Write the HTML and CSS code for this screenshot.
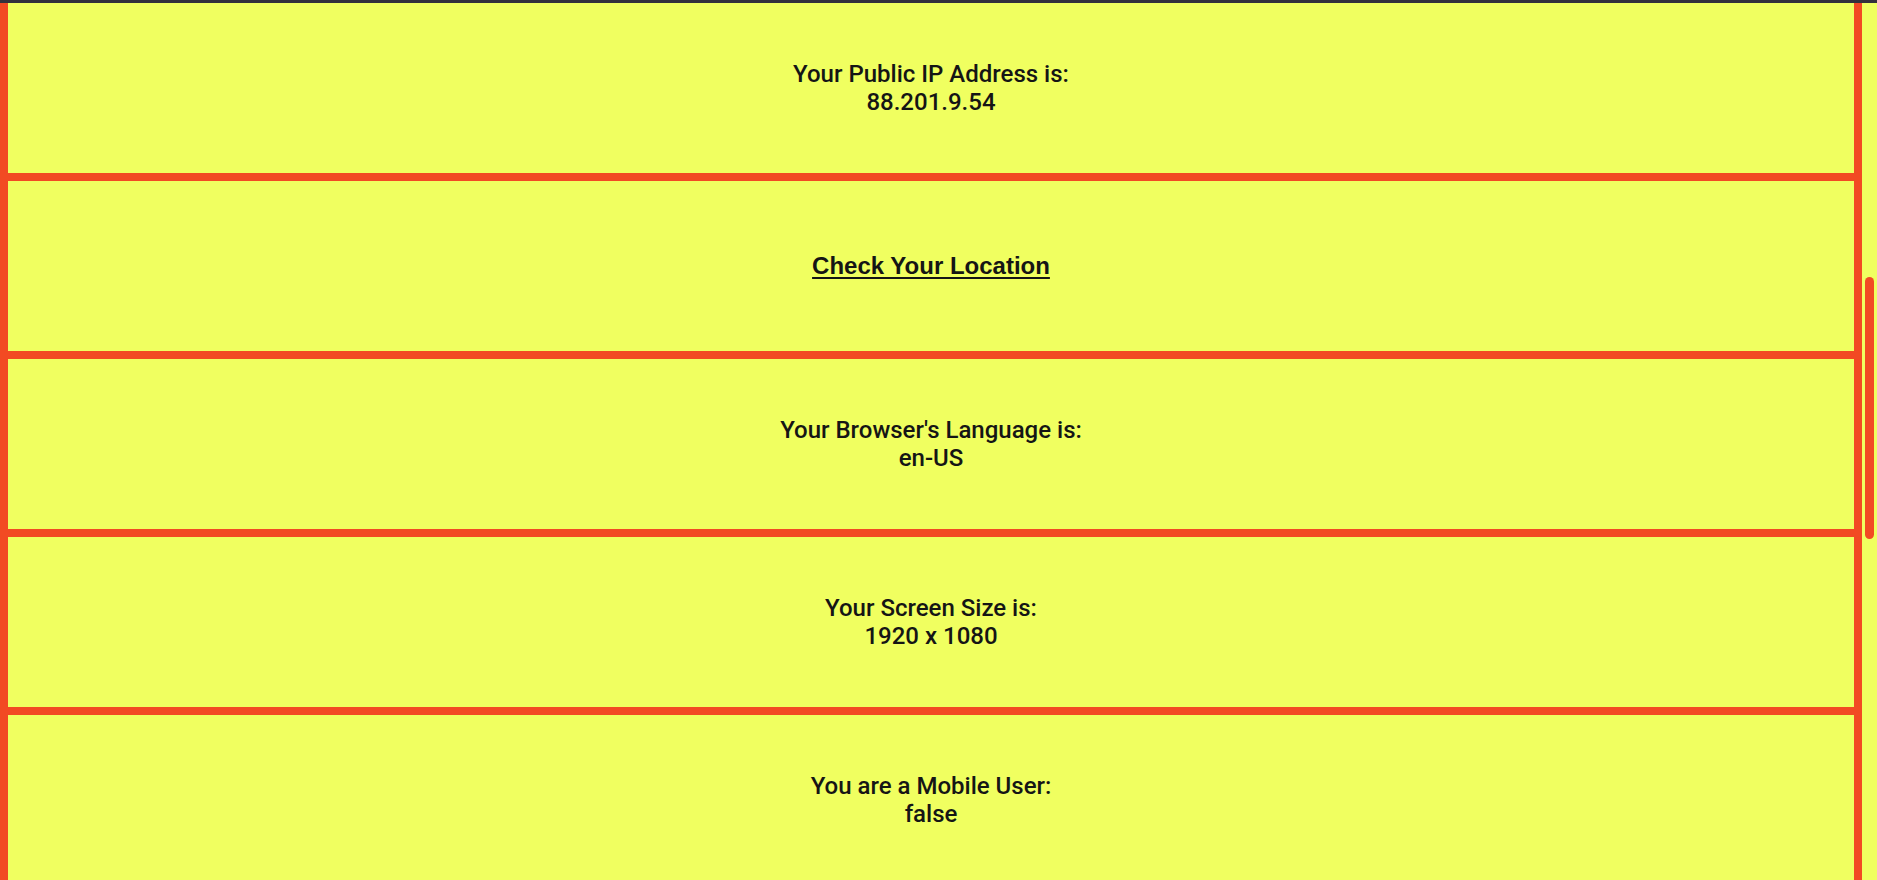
FILE: index.html
```html
<!DOCTYPE html>
<html lang="en">
<head>
<meta charset="utf-8">
<title>Your Info</title>
<link rel="stylesheet" href="styles.css">
</head>
<body>
<div class="topbar"></div>
<main class="stack">
  <section class="card">
    <p class="info">Your Public IP Address is:<br>88.201.9.54</p>
  </section>
  <section class="card">
    <a class="loc-link" href="#">Check Your Location</a>
  </section>
  <section class="card">
    <p class="info">Your Browser's Language is:<br>en-US</p>
  </section>
  <section class="card">
    <p class="info">Your Screen Size is:<br>1920 x 1080</p>
  </section>
  <section class="card">
    <p class="info">You are a Mobile User:<br>false</p>
  </section>
</main>
<div class="scroll-thumb"></div>
</body>
</html>
```
FILE: styles.css
```css
html, body {
  margin: 0;
  padding: 0;
  height: 100%;
  overflow: hidden;
}
body {
  background: #f0ff60;
  font-family: Roboto, "Noto Sans", sans-serif;
  color: #151515;
}
.topbar {
  height: 3px;
  background: #33303d;
}
.stack {
  display: flex;
  flex-direction: column;
  margin-right: 15px;
}
.card {
  box-sizing: content-box;
  height: 170px;
  flex: none;
  border-left: 8px solid #f24a23;
  border-right: 8px solid #f24a23;
  border-bottom: 8px solid #f24a23;
  display: flex;
  align-items: center;
  justify-content: center;
  text-align: center;
}
.info {
  margin: 0;
  font-size: 24px;
  font-weight: 500;
  line-height: 28px;
}
.loc-link {
  font-family: "Liberation Sans", Arial, sans-serif;
  font-weight: 700;
  font-size: 24px;
  color: #151515;
  text-decoration: underline;
  text-underline-offset: 3px;
}
.scroll-thumb {
  position: fixed;
  top: 277px;
  right: 3px;
  width: 9px;
  height: 262px;
  border-radius: 5px;
  background: #f24a23;
}
```
